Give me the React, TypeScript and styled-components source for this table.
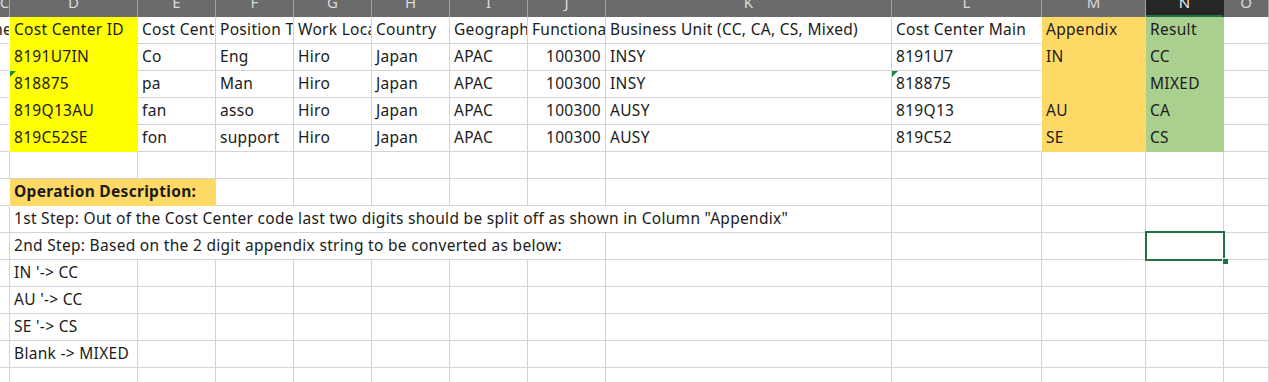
import React, { FC } from 'react';
import styled, { createGlobalStyle } from 'styled-components';

const YELLOW = '#ffff00';
const GOLD = '#ffd966';
const GREEN = '#a9d08e';
const GRID = '#d4d4d4';

interface Column {
  id: string;
  width: number;
}

interface CellData {
  text?: string;
  fill?: string;
  right?: boolean;
  bold?: boolean;
  span?: number;
  flag?: boolean;
  selected?: boolean;
  clipStart?: boolean;
}

const COLUMNS: Column[] = [
  { id: 'C', width: 10 },
  { id: 'D', width: 128 },
  { id: 'E', width: 78 },
  { id: 'F', width: 78 },
  { id: 'G', width: 78 },
  { id: 'H', width: 78 },
  { id: 'I', width: 78 },
  { id: 'J', width: 78 },
  { id: 'K', width: 286 },
  { id: 'L', width: 150 },
  { id: 'M', width: 104 },
  { id: 'N', width: 78 },
  { id: 'O', width: 45 },
];

const ACTIVE_COLUMN = 'N';

// a record row: C .. O
const record = (
  id: string,
  name: string,
  title: string,
  main: string,
  unit: string,
  appendix: string,
  result: string,
  flag = false
): CellData[] => [
  {},
  { text: id, fill: YELLOW, flag },
  { text: name },
  { text: title },
  { text: 'Hiro' },
  { text: 'Japan' },
  { text: 'APAC' },
  { text: '100300', right: true },
  { text: unit },
  { text: main, flag },
  { text: appendix, fill: GOLD },
  { text: result, fill: GREEN },
  {},
];

// a note row: one cell in D spilling over `span` columns, the rest empty
const note = (text: string, span = 1, extra: Partial<CellData> = {}): CellData[] => {
  const rest = COLUMNS.length - 1 - span;
  return [{}, { text, span, ...extra }, ...Array.from({ length: rest }, () => ({}))];
};

const ROWS: CellData[][] = [
  [
    { text: 'Cost Center Name', clipStart: true },
    { text: 'Cost Center ID', fill: YELLOW },
    { text: 'Cost Center Name' },
    { text: 'Position Title' },
    { text: 'Work Location' },
    { text: 'Country' },
    { text: 'Geography' },
    { text: 'Functional Area' },
    { text: 'Business Unit (CC, CA, CS, Mixed)' },
    { text: 'Cost Center Main' },
    { text: 'Appendix', fill: GOLD },
    { text: 'Result', fill: GREEN },
    {},
  ],
  record('8191U7IN', 'Co', 'Eng', '8191U7', 'INSY', 'IN', 'CC'),
  record('818875', 'pa', 'Man', '818875', 'INSY', '', 'MIXED', true),
  record('819Q13AU', 'fan', 'asso', '819Q13', 'AUSY', 'AU', 'CA'),
  record('819C52SE', 'fon', 'support', '819C52', 'AUSY', 'SE', 'CS'),
  note(''),
  note('Operation Description:', 2, { fill: GOLD, bold: true }),
  note('1st Step: Out of the Cost Center code last two digits should be split off as shown in Column "Appendix"', 8),
  note('2nd Step: Based on the 2 digit appendix string to be converted as below:', 7),
  note("IN '-> CC"),
  note("AU '-> CC"),
  note("SE '-> CS"),
  note('Blank -> MIXED'),
  note(''),
];

// the 2nd Step row holds the active cell in column N
ROWS[8][ROWS[8].length - 2] = { selected: true };

const App: FC = () => (
  <>
    <GlobalStyle />
    <Sheet $cols={COLUMNS.map((c) => `${c.width}px`).join(' ')}>
      {COLUMNS.map((c) => (
        <Heading key={c.id} $active={c.id === ACTIVE_COLUMN}>
          <HeadingLabel>{c.id}</HeadingLabel>
        </Heading>
      ))}
      {ROWS.map((row, r) =>
        row.map((cell, i) => {
          const next = row[i + 1];
          return (
            <Cell
              key={`${r}-${i}`}
              $span={cell.span ?? 1}
              $fill={cell.fill}
              $right={cell.right}
              $bold={cell.bold}
              $flag={cell.flag}
              $selected={cell.selected}
              $clipStart={cell.clipStart}
              $noRight={!!next?.fill}
            >
              {cell.clipStart ? <Tail>{cell.text}</Tail> : cell.text}
            </Cell>
          );
        })
      )}
    </Sheet>
  </>
);

const GlobalStyle = createGlobalStyle`
  html, body {
    margin: 0;
    padding: 0;
    background: #fff;
    overflow: hidden;
  }
  body {
    width: 1269px;
    height: 382px;
    font-family: "Noto Sans", "Noto Sans CJK JP", sans-serif;
  }
`;

const Sheet = styled.div<{ $cols: string }>`
  display: grid;
  grid-template-columns: ${(p) => p.$cols};
  grid-template-rows: 17px;
  grid-auto-rows: 27px;
  width: 1269px;
  height: 382px;
  overflow: hidden;
`;

const Heading = styled.div<{ $active?: boolean }>`
  display: flex;
  justify-content: center;
  align-items: flex-start;
  overflow: hidden;
  background: ${(p) => (p.$active ? '#262626' : '#6b6b6b')};
  border-right: 1px solid ${(p) => (p.$active ? '#262626' : '#a3a3a3')};
  box-shadow: ${(p) => (p.$active ? 'inset 0 -2px 0 #217346' : 'none')};
  color: ${(p) => (p.$active ? '#f0f0f0' : '#dadada')};
  font-size: 15px;
`;

const HeadingLabel = styled.span`
  line-height: 15px;
  margin-top: -5px;
`;

// text cut on its right by the next column, only its end showing
const Tail = styled.span`
  margin-right: -3px;
`;

const Cell = styled.div<{
  $span: number;
  $fill?: string;
  $right?: boolean;
  $bold?: boolean;
  $flag?: boolean;
  $selected?: boolean;
  $clipStart?: boolean;
  $noRight?: boolean;
}>`
  grid-column: span ${(p) => p.$span};
  position: relative;
  display: flex;
  align-items: flex-end;
  justify-content: ${(p) => (p.$right || p.$clipStart ? 'flex-end' : 'flex-start')};
  padding: 0 ${(p) => (p.$clipStart ? '0' : '4px')} 5px ${(p) => (p.$clipStart ? '0' : '4px')};
  background: ${(p) => p.$fill ?? '#fff'};
  border-right: 1px solid ${(p) => (p.$fill || p.$noRight ? 'transparent' : GRID)};
  border-bottom: 1px solid ${(p) => (p.$fill ? 'transparent' : GRID)};
  overflow: ${(p) => (p.$selected ? 'visible' : 'hidden')};
  white-space: nowrap;
  color: #1b1b1b;
  font-size: 15.5px;
  letter-spacing: 0.3px;
  line-height: 18px;
  font-weight: ${(p) => (p.$bold ? 700 : 400)};
  z-index: ${(p) => (p.$selected ? 2 : 'auto')};

  ${(p) =>
    p.$flag &&
    `
    &::before {
      content: '';
      position: absolute;
      top: 0;
      left: 0;
      border-top: 6px solid #1d8a35;
      border-right: 6px solid transparent;
    }
  `}

  ${(p) =>
    p.$selected &&
    `
    &::before {
      content: '';
      position: absolute;
      top: -2px;
      left: -1px;
      right: -2px;
      bottom: -2px;
      border: 2px solid #217346;
    }
    &::after {
      content: '';
      position: absolute;
      right: -5px;
      bottom: -5px;
      width: 5px;
      height: 5px;
      background: #217346;
      border: 1px solid #fff;
      border-width: 1px 0 0 1px;
    }
  `}
`;

export default App;
